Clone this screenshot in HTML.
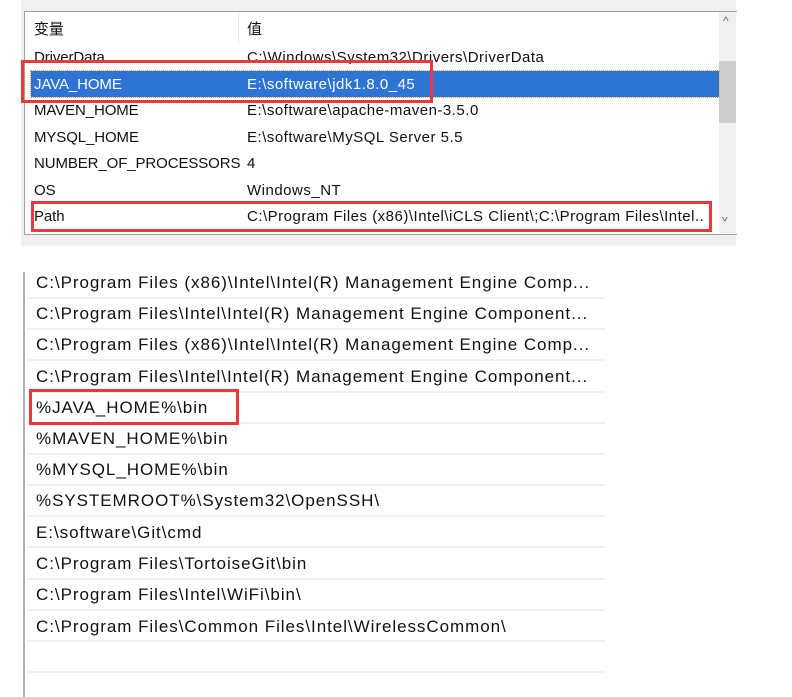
<!DOCTYPE html>
<html><head><meta charset="utf-8"><style>
body{margin:0;width:792px;height:697px;background:#fff;position:relative;overflow:hidden;font-family:"Liberation Sans","Noto Sans CJK SC",sans-serif;color:#111}
.a{position:absolute;white-space:nowrap}
.t{font-size:15px;letter-spacing:-0.1px}
.v{font-size:15px;letter-spacing:0.5px}
.b{font-size:17px;letter-spacing:0.95px}
.sep{position:absolute;left:27px;width:578px;height:2px;background:#efefef}
.red{position:absolute;border:3px solid #e83a3a;box-sizing:border-box}
</style></head><body>
<div class="a" style="left:21px;top:0;width:715px;height:246px;background:#f0f0f0"></div>
<div class="a" style="left:24px;top:11px;width:712px;height:222px;background:#fff;border-top:1px solid #a0a0a0;border-left:1px solid #a0a0a0;border-bottom:1px solid #a0a0a0"></div>
<div class="a" style="left:719px;top:12px;width:17px;height:221px;background:#f0f0f0"></div>
<div class="a" style="left:719px;top:61px;width:17px;height:62px;background:#cdcdcd"></div>
<div class="a" style="left:723px;top:14px;font-size:12px;color:#606060">&#94;</div>
<div class="a" style="left:722px;top:210px;font-size:12px;color:#606060;transform:scaleY(-1)">&#94;</div>
<div class="a" style="left:238px;top:13px;width:1px;height:30px;background:#e5e5e5"></div>
<div class="a" style="left:31px;top:71px;width:688px;height:26px;background:#2d74d4;outline:1px dotted #f0a040"></div>
<div class="a t" style="left:34px;top:18px">变量</div>
<div class="a t" style="left:247px;top:18px">值</div>
<div class="a t" style="left:34px;top:49px;height:15px;overflow:hidden">DriverData</div>
<div class="a v" style="left:247px;top:49px;height:15px;overflow:hidden">C:\Windows\System32\Drivers\DriverData</div>
<div class="a t" style="left:34px;top:76px;color:#fff">JAVA_HOME</div>
<div class="a v" style="left:247px;top:76px;color:#fff">E:\software\jdk1.8.0_45</div>
<div class="a t" style="left:34px;top:102px">MAVEN_HOME</div>
<div class="a v" style="left:247px;top:102px">E:\software\apache-maven-3.5.0</div>
<div class="a t" style="left:34px;top:129px">MYSQL_HOME</div>
<div class="a v" style="left:247px;top:129px">E:\software\MySQL Server 5.5</div>
<div class="a t" style="left:34px;top:155px">NUMBER_OF_PROCESSORS</div>
<div class="a v" style="left:247px;top:155px">4</div>
<div class="a t" style="left:34px;top:182px">OS</div>
<div class="a v" style="left:247px;top:182px">Windows_NT</div>
<div class="a t" style="left:34px;top:208px">Path</div>
<div class="a v" style="left:247px;top:208px;width:462px;overflow:hidden">C:\Program Files (x86)\Intel\iCLS Client\;C:\Program Files\Intel..</div>
<div class="red" style="left:21px;top:60px;width:412px;height:43px"></div>
<div class="red" style="left:31px;top:201px;width:681px;height:31px"></div>

<div class="a" style="left:23px;top:272px;width:2px;height:425px;background:#b0b0b0"></div>
<div class="sep" style="top:297px"></div><div class="sep" style="top:328px"></div><div class="sep" style="top:359px"></div><div class="sep" style="top:391px"></div><div class="sep" style="top:422px"></div><div class="sep" style="top:453px"></div><div class="sep" style="top:484px"></div><div class="sep" style="top:515px"></div><div class="sep" style="top:546px"></div><div class="sep" style="top:578px"></div><div class="sep" style="top:609px"></div><div class="sep" style="top:640px"></div><div class="sep" style="top:671px"></div>
<div class="a b" style="left:36px;top:273px">C:\Program Files (x86)\Intel\Intel(R) Management Engine Comp...</div>
<div class="a b" style="left:36px;top:304px">C:\Program Files\Intel\Intel(R) Management Engine Component...</div>
<div class="a b" style="left:36px;top:335px">C:\Program Files (x86)\Intel\Intel(R) Management Engine Comp...</div>
<div class="a b" style="left:36px;top:367px">C:\Program Files\Intel\Intel(R) Management Engine Component...</div>
<div class="a b" style="left:36px;top:398px">%JAVA_HOME%\bin</div>
<div class="a b" style="left:36px;top:429px">%MAVEN_HOME%\bin</div>
<div class="a b" style="left:36px;top:460px">%MYSQL_HOME%\bin</div>
<div class="a b" style="left:36px;top:491px">%SYSTEMROOT%\System32\OpenSSH\</div>
<div class="a b" style="left:36px;top:523px">E:\software\Git\cmd</div>
<div class="a b" style="left:36px;top:554px">C:\Program Files\TortoiseGit\bin</div>
<div class="a b" style="left:36px;top:585px">C:\Program Files\Intel\WiFi\bin\</div>
<div class="a b" style="left:36px;top:617px">C:\Program Files\Common Files\Intel\WirelessCommon\</div>
<div class="red" style="left:29px;top:389px;width:210px;height:36px"></div>
</body></html>
